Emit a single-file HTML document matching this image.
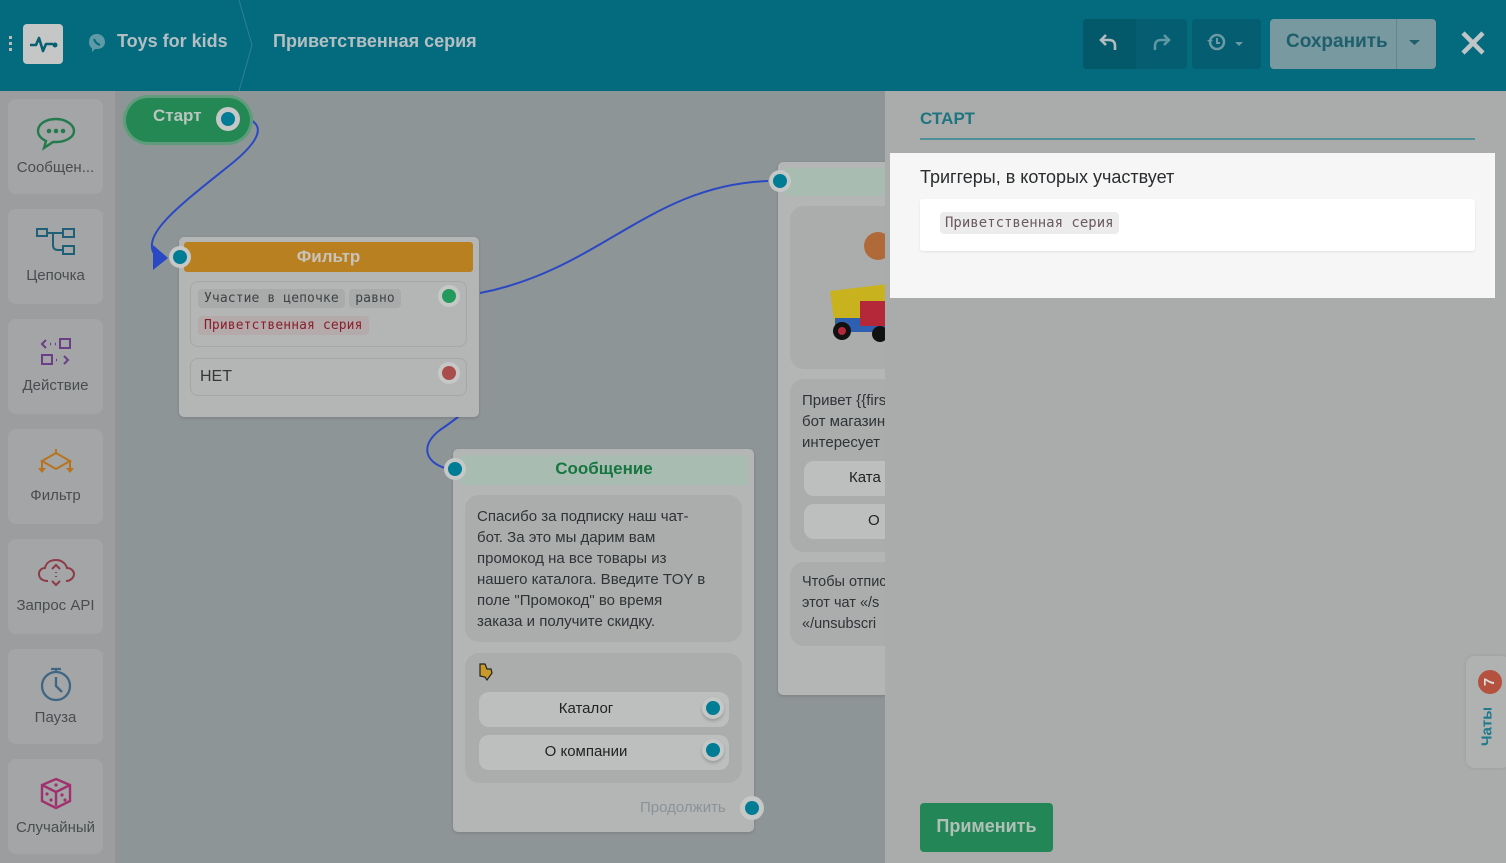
<!DOCTYPE html>
<html><head><meta charset="utf-8">
<style>
*{box-sizing:border-box;margin:0;padding:0}
body{width:1506px;height:863px;overflow:hidden;position:relative;background:#8e9597;font-family:"Liberation Sans","DejaVu Sans",sans-serif;}
.a{position:absolute}
.hdr{left:0;top:0;width:1506px;height:91px;background:#046b7f}
.side{left:0;top:91px;width:120px;height:772px;background:#9b9d9e}
.scr{left:115px;top:91px;width:5px;height:772px;background:#929495}
.card{left:8px;width:95px;height:95px;background:#a3a5a6;border-radius:8px;text-align:center;font-size:15px;color:#4a4d4f}
.card svg{display:block;margin:16px auto 6px}
.node{background:#b4b6b6;border-radius:5px;box-shadow:0 1px 3px rgba(0,0,0,.15)}
.dot{width:22px;height:22px;border-radius:50%;background:#c6c8c8;}
.dot i{position:absolute;left:4px;top:4px;width:14px;height:14px;border-radius:50%;background:#007c94}
.tag{display:inline-block;background:#a9abab;border-radius:4px;padding:2px 6px;font-family:"DejaVu Sans Mono","Liberation Mono",monospace;font-size:13px;color:#3f4244;letter-spacing:.1px}
.btn{background:#bdbfbf;border-radius:10px;font-size:15px;color:#222}
.txt{font-size:15px;color:#2f3335;line-height:21px;white-space:nowrap}
</style></head><body>
<div class="a hdr"></div>
<div class="a" style="left:9px;top:36px;width:3px;height:3px;background:#bbb;box-shadow:0 6px 0 #bbb,0 12px 0 #bbb"></div>
<div class="a" style="left:23px;top:24px;width:40px;height:40px;background:#c5c7c7;border-radius:4px">
<svg width="40" height="40" viewBox="0 0 40 40"><path d="M7 21h6l3-7 4 13 3-7h7" fill="none" stroke="#075f70" stroke-width="2.6" stroke-linejoin="round"/><circle cx="32" cy="21" r="2.5" fill="#075f70"/></svg></div>
<svg class="a" style="left:88px;top:33px" width="18" height="20" viewBox="0 0 18 20"><path d="M9 1C4 1 1 4 1 9c0 3 1 5 3 6v4l3-3h2c5 0 8-3 8-7s-3-8-8-8z" fill="#5f9aa6"/><path d="M6 6c1 3 3 5 6 6" stroke="#046b7f" stroke-width="2" fill="none"/></svg>
<div class="a" style="left:117px;top:31px;font-size:18px;font-weight:bold;color:#b5bfc2">Toys for kids</div>
<svg class="a" style="left:235px;top:0" width="20" height="91"><path d="M4 0 L17 45 L4 91" stroke="#2f7f90" stroke-width="1" fill="none"/></svg>
<div class="a" style="left:273px;top:31px;font-size:18px;font-weight:bold;color:#b5bfc2">Приветственная серия</div>
<div class="a" style="left:1083px;top:19px;width:104px;height:50px;background:#045d70;border-radius:4px"></div>
<div class="a" style="left:1083px;top:19px;width:53px;height:50px;background:#03586a;border-radius:4px 0 0 4px"></div>
<svg class="a" style="left:1098px;top:30px" width="22" height="24" viewBox="0 0 22 24"><path d="M8 5 L3 10 L8 15 M3 10 H11 Q17 10 17 16 V20" stroke="#b3bcbf" stroke-width="2.6" fill="none"/></svg>
<svg class="a" style="left:1150px;top:30px" width="22" height="24" viewBox="0 0 22 24"><path d="M14 5 L19 10 L14 15 M19 10 H11 Q5 10 5 16 V20" stroke="#5f97a3" stroke-width="2.6" fill="none"/></svg>
<div class="a" style="left:1192px;top:19px;width:69px;height:50px;background:#045d70;border-radius:4px"></div>
<svg class="a" style="left:1205px;top:32px" width="44" height="22" viewBox="0 0 44 22"><circle cx="12" cy="10" r="7" stroke="#6b9aa4" stroke-width="2.5" fill="none"/><path d="M12 6v5h3" stroke="#6b9aa4" stroke-width="2" fill="none"/><path d="M2 8l3 3 3-3" fill="#6b9aa4"/><path d="M30 10h8l-4 4z" fill="#6b9aa4"/></svg>
<div class="a" style="left:1270px;top:19px;width:166px;height:50px;background:#77999f;border-radius:4px"></div>
<div class="a" style="left:1396px;top:19px;width:1px;height:50px;background:#5f8990"></div>
<div class="a" style="left:1286px;top:31px;font-size:19px;font-weight:bold;color:#1f5f6c">Сохранить</div>
<svg class="a" style="left:1409px;top:39px" width="12" height="8"><path d="M0 1h11l-5.5 5z" fill="#1f5f6c"/></svg>
<svg class="a" style="left:1460px;top:30px" width="26" height="26"><path d="M3 3L23 23M23 3L3 23" stroke="#c0c6c7" stroke-width="4.5"/></svg>

<div class="a side"></div><div class="a scr"></div>
<div class="a card" style="top:99px"><svg width="44" height="38" viewBox="0 0 44 38"><path d="M22 4C12 4 4 9 4 16c0 5 4 8 8 10l-2 7 9-6h3c10 0 18-5 18-11S32 4 22 4z" fill="none" stroke="#237a4c" stroke-width="2.4"/><circle cx="15" cy="16" r="2.3" fill="#237a4c"/><circle cx="22" cy="16" r="2.3" fill="#237a4c"/><circle cx="29" cy="16" r="2.3" fill="#237a4c"/></svg>Сообщен...</div>
<div class="a card" style="top:209px"><svg width="44" height="36" viewBox="0 0 44 36"><rect x="3" y="4" width="10" height="7" fill="none" stroke="#1f5f78" stroke-width="2"/><rect x="29" y="4" width="11" height="8" fill="none" stroke="#1f5f78" stroke-width="2"/><rect x="29" y="21" width="11" height="8" fill="none" stroke="#1f5f78" stroke-width="2"/><path d="M13 8h16M19 8v12q0 5 5 5h5" fill="none" stroke="#1f5f78" stroke-width="2"/></svg>Цепочка</div>
<div class="a card" style="top:319px"><svg width="44" height="36" viewBox="0 0 44 36"><path d="M12 5l-4 4 4 4M30 21l4 4-4 4" fill="none" stroke="#6b3f87" stroke-width="2"/><rect x="26" y="4" width="10" height="9" fill="none" stroke="#6b3f87" stroke-width="2"/><rect x="8" y="20" width="10" height="9" fill="none" stroke="#6b3f87" stroke-width="2"/><path d="M16 9h1M21 9h1M22 25h1M27 25h0" stroke="#6b3f87" stroke-width="2.5"/></svg>Действие</div>
<div class="a card" style="top:429px"><svg width="48" height="36" viewBox="0 0 48 36"><path d="M24 4v4L10 16l14 8 14-8-14-8M10 16v8M38 16v8" fill="none" stroke="#b8731e" stroke-width="2"/><path d="M6 23h8l-4 5zM34 23h8l-4 5z" fill="#b8731e"/></svg>Фильтр</div>
<div class="a card" style="top:539px"><svg width="44" height="36" viewBox="0 0 44 36"><path d="M14 26c-6 0-9-3-9-7s3-6 6-6c1-5 5-8 11-8s10 4 11 8c4 0 7 3 7 6s-3 7-8 7" fill="none" stroke="#8e3a47" stroke-width="2"/><path d="M18 14l4-4 4 4M18 26l4 4 4-4M22 17v1M22 21v1" fill="none" stroke="#8e3a47" stroke-width="2"/></svg>Запрос API</div>
<div class="a card" style="top:649px"><svg width="44" height="38" viewBox="0 0 44 38"><circle cx="22" cy="21" r="14" fill="none" stroke="#3f6683" stroke-width="2.3"/><path d="M17 4h10M22 4v3M22 12v9l6 6" fill="none" stroke="#3f6683" stroke-width="2.3"/></svg>Пауза</div>
<div class="a card" style="top:759px"><svg width="44" height="38" viewBox="0 0 44 38"><path d="M22 4l14 6v16l-14 7-14-7V10zM8 10l14 7 14-7M22 17v14" fill="none" stroke="#a0316e" stroke-width="2.4"/><circle cx="22" cy="10" r="1.6" fill="#a0316e"/><circle cx="13" cy="19" r="1.6" fill="#a0316e"/><circle cx="17" cy="25" r="1.6" fill="#a0316e"/><circle cx="28" cy="20" r="1.6" fill="#a0316e"/><circle cx="31" cy="25" r="1.6" fill="#a0316e"/></svg>Случайный</div>

<svg class="a" style="left:0;top:0" width="1506" height="863">
<path d="M245 118 C270 125 255 145 230 165 C180 205 140 235 155 255" fill="none" stroke="#2b48c4" stroke-width="2"/>
<path d="M153 245 L168 258 L153 270z" fill="#2b48c4"/>
<path d="M480 293 C600 270 650 185 768 181" fill="none" stroke="#2b48c4" stroke-width="2"/>
<path d="M470 377 C490 390 470 410 440 430 C420 445 425 462 445 468" fill="none" stroke="#2b48c4" stroke-width="2"/>
</svg>

<div class="a" style="left:126px;top:98px;width:124px;height:44px;background:#248854;border-radius:22px;box-shadow:0 0 0 3px #5f9c7c"></div>
<div class="a" style="left:153px;top:106px;font-size:17px;font-weight:bold;color:#b9c6bf">Старт</div>
<div class="a dot" style="left:216px;top:107px;width:24px;height:24px"><i style="left:5px;top:5px"></i></div>

<div class="a node" style="left:179px;top:237px;width:300px;height:180px"></div>
<div class="a" style="left:184px;top:242px;width:289px;height:30px;background:#b98022;border-radius:3px;text-align:center;font-size:17px;font-weight:bold;color:#c8c3bb;line-height:30px">Фильтр</div>
<div class="a dot" style="left:169px;top:246px"><i></i></div>
<div class="a" style="left:190px;top:281px;width:277px;height:66px;border:1px solid #a5a7a7;border-radius:8px"></div>
<div class="a" style="left:198px;top:289px"><span class="tag">Участие в цепочке</span> <span class="tag">равно</span></div>
<div class="a" style="left:198px;top:316px"><span class="tag" style="color:#8a1f2b;background:#b4aaab">Приветственная серия</span></div>
<div class="a dot" style="left:438px;top:285px"><i style="background:#239a5b"></i></div>
<div class="a" style="left:190px;top:358px;width:277px;height:38px;border:1px solid #a5a7a7;border-radius:8px;font-size:16px;color:#353839;padding:9px 9px">НЕТ</div>
<div class="a dot" style="left:438px;top:362px"><i style="background:#a84c4c"></i></div>

<div class="a node" style="left:453px;top:449px;width:301px;height:383px"></div>
<div class="a" style="left:460px;top:455px;width:288px;height:30px;background:#a9bcb2;border-radius:3px;text-align:center;font-size:17px;font-weight:bold;color:#16763f;line-height:28px">Сообщение</div>
<div class="a dot" style="left:444px;top:458px"><i></i></div>
<div class="a" style="left:465px;top:495px;width:277px;height:147px;background:#abadad;border-radius:14px"></div>
<div class="a txt" style="left:477px;top:506px">Спасибо за подписку наш чат-<br>бот. За это мы дарим вам<br>промокод на все товары из<br>нашего каталога. Введите TOY в<br>поле "Промокод" во время<br>заказа и получите скидку.</div>
<div class="a" style="left:465px;top:653px;width:277px;height:130px;background:#abadad;border-radius:14px"></div>
<svg class="a" style="left:478px;top:662px" width="16" height="20" viewBox="0 0 16 20"><path d="M2 2h5l2 5h4l1 4-5 7-2-3-5-1z" fill="#c99a2a" stroke="#222" stroke-width="1.2"/></svg>
<div class="a btn" style="left:479px;top:692px;width:250px;height:35px;line-height:33px;text-align:center;padding-right:36px">Каталог</div>
<div class="a dot" style="left:702px;top:697px;box-shadow:0 2px 3px rgba(0,0,0,.2)"><i></i></div>
<div class="a btn" style="left:479px;top:735px;width:250px;height:35px;line-height:33px;text-align:center;padding-right:36px">О компании</div>
<div class="a dot" style="left:702px;top:739px;box-shadow:0 2px 3px rgba(0,0,0,.2)"><i></i></div>
<div class="a" style="left:640px;top:799px;font-size:15px;color:#8b9396">Продолжить</div>
<div class="a dot" style="left:740px;top:796px;width:24px;height:24px"><i style="left:5px;top:5px"></i></div>

<div class="a node" style="left:778px;top:162px;width:110px;height:533px;border-radius:5px 0 0 5px"></div>
<div class="a" style="left:785px;top:168px;width:100px;height:28px;background:#a9bcb2"></div>
<div class="a dot" style="left:769px;top:170px"><i></i></div>
<div class="a" style="left:790px;top:206px;width:100px;height:163px;background:#abadad;border-radius:14px 0 0 14px;overflow:hidden">
<svg width="100" height="163"><circle cx="88" cy="40" r="14" fill="#b06a3a"/><path d="M40 85 L98 78 L98 120 L45 122z" fill="#c8b21e"/><rect x="45" y="112" width="53" height="14" fill="#2e5fb0"/><path d="M70 95 h28 v25 h-28z" fill="#b4283a"/><circle cx="52" cy="125" r="9" fill="#111"/><circle cx="52" cy="125" r="4" fill="#b4283a"/><circle cx="90" cy="128" r="8" fill="#111"/></svg></div>
<div class="a" style="left:790px;top:379px;width:100px;height:173px;background:#abadad;border-radius:14px 0 0 14px"></div>
<div class="a txt" style="left:802px;top:390px;overflow:hidden;width:83px">Привет {{firs<br>бот магазин<br>интересует</div>
<div class="a btn" style="left:804px;top:461px;width:90px;height:35px;line-height:33px;padding-left:45px;border-radius:10px 0 0 10px">Ката</div>
<div class="a btn" style="left:804px;top:504px;width:90px;height:35px;line-height:33px;padding-left:64px;border-radius:10px 0 0 10px">О</div>
<div class="a" style="left:790px;top:562px;width:100px;height:84px;background:#abadad;border-radius:14px 0 0 14px"></div>
<div class="a txt" style="left:802px;top:572px;font-size:14.5px;overflow:hidden;width:83px">Чтобы отпис<br>этот чат «/s<br>«/unsubscri</div>

<div class="a" style="left:885px;top:91px;width:621px;height:772px;background:#aaacab"></div>
<div class="a" style="left:920px;top:109px;font-size:17px;font-weight:bold;color:#1e7580">СТАРТ</div>
<div class="a" style="left:920px;top:138px;width:555px;height:2px;background:#4f9197"></div>
<div class="a" style="left:890px;top:153px;width:605px;height:145px;background:#f5f6f5"></div>
<div class="a" style="left:920px;top:167px;font-size:18px;color:#2a2d2f">Триггеры, в которых участвует</div>
<div class="a" style="left:920px;top:199px;width:555px;height:52px;background:#fff;border-radius:3px;box-shadow:0 1px 2px rgba(0,0,0,.08)"></div>
<div class="a" style="left:940px;top:212px;background:#ececec;border-radius:4px;padding:3px 5px;font-family:'DejaVu Sans Mono','Liberation Mono',monospace;font-size:14px;color:#6a5a5f">Приветственная серия</div>
<div class="a" style="left:920px;top:803px;width:133px;height:49px;background:#238657;border-radius:4px;text-align:center;line-height:47px;font-size:18px;font-weight:bold;color:#b0c0b6">Применить</div>
<div class="a" style="left:1466px;top:656px;width:44px;height:112px;background:#b0b2b1;border-radius:8px;box-shadow:0 0 3px rgba(0,0,0,.1)"></div>
<div class="a" style="left:1478px;top:670px;width:24px;height:24px;border-radius:50%;background:#b4513f;color:#ddd;font-size:15px;font-weight:bold;text-align:center;line-height:24px;transform:rotate(-90deg)">7</div>
<div class="a" style="left:1462px;top:718px;width:50px;font-size:15px;font-weight:bold;color:#1f7a8c;transform:rotate(-90deg);text-align:center">Чаты</div>
</body></html>
